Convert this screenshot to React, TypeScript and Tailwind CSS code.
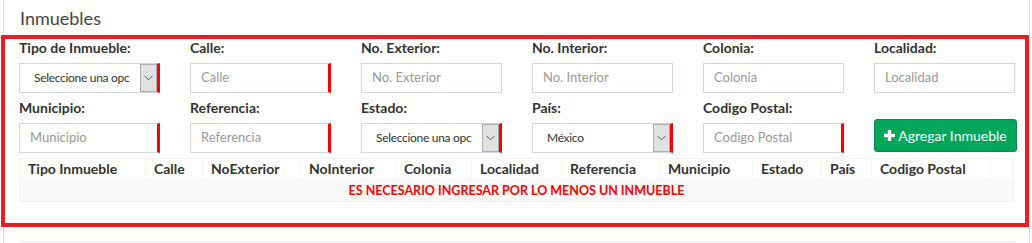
import React from 'react';

const font = "font-['Lato','Open_Sans',sans-serif]";

function Chevron() {
  return (
    <svg width="9" height="6" viewBox="0 0 9 6" fill="none">
      <polyline points="0.5,0.8 4.5,4.8 8.5,0.8" stroke="#555" strokeWidth="1" />
    </svg>
  );
}

function TextInput({ placeholder, required }: { placeholder: string; required?: boolean }) {
  return (
    <div
      className={
        'h-[30px] flex items-center pl-[10px] border border-[#d2d6de] bg-white text-[13px] text-[#999] whitespace-nowrap ' +
        (required ? 'border-r-[3px] border-r-[#ff0000]' : '')
      }
    >
      {placeholder}
    </div>
  );
}

function SelectBox({ value }: { value: string }) {
  return (
    <div className="h-[30px] flex border border-[#d2d6de] border-r-[3px] border-r-[#ff0000] bg-white">
      <div className="flex-1 min-w-0 overflow-hidden whitespace-nowrap flex items-center pl-[14px] text-[12px] tracking-[-0.3px] text-[#333]">
        {value}
      </div>
      <div className="w-[17px] shrink-0 border border-[#adadad] bg-[#e1e1e1] flex items-center justify-center">
        <Chevron />
      </div>
    </div>
  );
}

function Field({ label, children }: { label: string; children: React.ReactNode }) {
  return (
    <div className="flex flex-col">
      <label className="h-[18px] leading-[18px] text-[14px] font-bold text-[#333] mb-[6px] whitespace-nowrap">
        {label}
      </label>
      {children}
    </div>
  );
}

const columns: [string, number][] = [
  ['Tipo Inmueble', 126],
  ['Calle', 57],
  ['NoExterior', 98],
  ['NoInterior', 95],
  ['Colonia', 76],
  ['Localidad', 90],
  ['Referencia', 98],
  ['Municipio', 93],
  ['Estado', 69],
  ['País', 50],
  ['Codigo Postal', 119],
  ['', 23],
];

export default function App() {
  return (
    <div className={`w-[1032px] h-[243px] bg-white overflow-hidden ${font}`}>
      <div className="ml-[3px] w-[1027px] h-full border-x border-[#dddddd]">
        {/* header */}
        <div className="h-[35px] pl-[16px] pt-[8px]">
          <h3 className="text-[18px] leading-[20px] text-[#444]">Inmuebles</h3>
        </div>

        {/* highlighted form */}
        <div className="-ml-[3px] w-[1028px] h-[192px] border-4 border-[#ed1c24] pl-[14px]">
          <div className="grid grid-cols-[repeat(6,141px)] gap-x-[30px] gap-y-[6px]">
            <Field label="Tipo de Inmueble:">
              <SelectBox value="Seleccione una opc" />
            </Field>
            <Field label="Calle:">
              <TextInput placeholder="Calle" required />
            </Field>
            <Field label="No. Exterior:">
              <TextInput placeholder="No. Exterior" />
            </Field>
            <Field label="No. Interior:">
              <TextInput placeholder="No. Interior" />
            </Field>
            <Field label="Colonia:">
              <TextInput placeholder="Colonia" />
            </Field>
            <Field label="Localidad:">
              <TextInput placeholder="Localidad" />
            </Field>

            <Field label="Municipio:">
              <TextInput placeholder="Municipio" required />
            </Field>
            <Field label="Referencia:">
              <TextInput placeholder="Referencia" required />
            </Field>
            <Field label="Estado:">
              <SelectBox value="Seleccione una opc" />
            </Field>
            <Field label="País:">
              <SelectBox value="México" />
            </Field>
            <Field label="Codigo Postal:">
              <TextInput placeholder="Codigo Postal" required />
            </Field>
            <div className="flex flex-col justify-end">
              <button className="w-[143px] h-[33px] mb-[1px] rounded-[3px] bg-[#00a65a] border border-[#008d4c] text-white text-[14px] flex items-center justify-center gap-[3px]">
                <svg width="11" height="11" viewBox="0 0 11 11">
                  <rect x="3.8" y="0" width="3.4" height="11" fill="#fff" />
                  <rect x="0" y="3.8" width="11" height="3.4" fill="#fff" />
                </svg>
                Agregar Inmueble
              </button>
            </div>
          </div>

          {/* table */}
          <table className="mt-[5px] w-[994px] table-fixed border-collapse text-[14px]">
            <colgroup>
              {columns.map(([name, w], i) => (
                <col key={i} style={{ width: w }} />
              ))}
            </colgroup>
            <thead>
              <tr>
                {columns.map(([name], i) => (
                  <th
                    key={i}
                    className="border border-[#f4f4f4] h-[21px] px-[8px] py-0 leading-[20px] text-left font-bold text-[#333] whitespace-nowrap"
                  >
                    {name}
                  </th>
                ))}
              </tr>
            </thead>
            <tbody>
              <tr className="bg-[#f9f9f9]">
                <td
                  colSpan={12}
                  className="border border-[#f0f0f0] h-[22px] py-0 leading-[20px] text-center text-[12.5px] font-bold text-[#ff0000]"
                >
                  ES NECESARIO INGRESAR POR LO MENOS UN INMUEBLE
                </td>
              </tr>
            </tbody>
          </table>
        </div>

        <div className="mt-[14px] ml-[16px] w-[994px] border-t border-[#f0f0f0]" />
      </div>
    </div>
  );
}
